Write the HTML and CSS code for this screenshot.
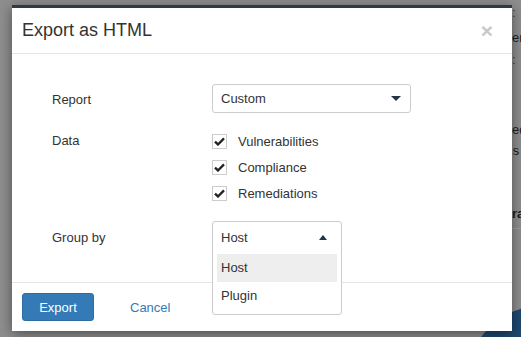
FILE: index.html
```html
<!DOCTYPE html>
<html>
<head>
<title>Export as HTML</title>
<link rel="stylesheet" href="styles.css">
</head>
<body>

<div id="page">
    <span class="bg-text t1">:</span>
    <span class="bg-text t2">en</span>
    <span class="bg-text t3">:</span>
    <span class="bg-text t4">ed</span>
    <span class="bg-text t5">s:</span>
    <span class="bg-text t6">ra</span>
    <div class="bg-rule"></div>
    <div class="bg-chart"></div>
</div>

<div id="modal">
    <div class="modal-header">
        <h4>Export as HTML</h4>
        <span class="close">&times;</span>
    </div>

    <div class="modal-body">
        <div class="form-row">
            <label class="row-label">Report</label>
            <div class="select">
                <span>Custom</span>
                <span class="caret"></span>
            </div>
        </div>

        <div class="form-row">
            <label class="row-label">Data</label>
            <div class="checks">
                <div class="check-row"><span class="box"><svg viewBox="0 0 12 10" width="11" height="9"><path d="M1 5.2 L4.3 8.3 L11 1.6" fill="none" stroke="#222" stroke-width="2.6"/></svg></span>Vulnerabilities</div>
                <div class="check-row"><span class="box"><svg viewBox="0 0 12 10" width="11" height="9"><path d="M1 5.2 L4.3 8.3 L11 1.6" fill="none" stroke="#222" stroke-width="2.6"/></svg></span>Compliance</div>
                <div class="check-row"><span class="box"><svg viewBox="0 0 12 10" width="11" height="9"><path d="M1 5.2 L4.3 8.3 L11 1.6" fill="none" stroke="#222" stroke-width="2.6"/></svg></span>Remediations</div>
            </div>
        </div>

        <div class="form-row">
            <label class="row-label">Group by</label>
            <div class="select-wrap">
                <div class="select-open">
                    <div class="select-head">
                        <span>Host</span>
                        <span class="caret up"></span>
                    </div>
                    <div class="option active">Host</div>
                    <div class="option">Plugin</div>
                </div>
            </div>
        </div>
    </div>

    <div class="modal-footer">
        <button class="btn-primary">Export</button>
        <a class="btn-link">Cancel</a>
    </div>
</div>

</body>
</html>
```

FILE: styles.css
```css
html, body {
    margin: 0;
    height: 100%;
    overflow: hidden;
}

body {
    font-family: "Liberation Sans", Arial, sans-serif;
    font-size: 13px;
    color: #333;
    background: #8e8e8e;
    position: relative;
}

/* page behind the overlay */
#page {
    position: absolute;
    inset: 0;
    overflow: hidden;
}

.bg-text {
    position: absolute;
    left: 512px;
    color: #1e1e1e;
    font-size: 13px;
    line-height: 16px;
    white-space: nowrap;
}

.t1 { top: 5px; color: #2a3d55; }
.t2 { top: 30px; }
.t3 { top: 52px; color: #2a3d55; }
.t4 { top: 122px; }
.t5 { top: 144px; font-family: "Liberation Mono", monospace; }
.t6 { top: 206px; font-weight: bold; }

.bg-rule {
    position: absolute;
    left: 512px;
    right: 0;
    top: 228px;
    height: 1px;
    background: #9c9c9c;
}

.bg-chart {
    position: absolute;
    left: 465px;
    top: 305px;
    width: 160px;
    height: 160px;
    border-radius: 50%;
    background: #1f4870;
}

#modal {
    position: relative;
    margin: 5px 0 0 12px;
    width: 500px;
    background: #fff;
    border-top: 3px solid #2b3b4c;
    box-shadow: 0 3px 12px rgba(0, 0, 0, 0.45);
}

.modal-header {
    display: flex;
    justify-content: space-between;
    align-items: center;
    height: 45px;
    padding: 0 19px 0 10px;
    border-bottom: 1px solid #e5e5e5;
}

.modal-header h4 {
    margin: 0;
    font-size: 18px;
    font-weight: normal;
    color: #333;
}

.close {
    font-size: 21px;
    font-weight: bold;
    color: #c8c8c8;
    line-height: 1;
}

.modal-body {
    padding: 30px 40px 30px 40px;
    display: flex;
    flex-direction: column;
    gap: 21px;
}

.form-row {
    display: flex;
    align-items: flex-start;
}

.row-label {
    width: 160px;
    flex: none;
}

.form-row:first-child .row-label { padding-top: 8px; }
.form-row:nth-child(2) .row-label { margin-top: -1px; }
.form-row:last-child .row-label { padding-top: 8px; }

.select {
    width: 199px;
    height: 29px;
    box-sizing: border-box;
    border: 1px solid #ccc;
    border-radius: 3px;
    display: flex;
    align-items: center;
    justify-content: space-between;
    padding: 0 9px 0 8px;
}

.caret {
    width: 0;
    height: 0;
    border-left: 5px solid transparent;
    border-right: 5px solid transparent;
    border-top: 5px solid #233447;
}

.caret.up {
    border-top: none;
    border-bottom: 5px solid #233447;
    border-left-width: 4.5px;
    border-right-width: 4.5px;
}

.checks {
    display: flex;
    flex-direction: column;
    gap: 11px;
}

.check-row {
    display: flex;
    align-items: center;
    height: 15px;
}

.box {
    width: 15px;
    height: 15px;
    box-sizing: border-box;
    border: 1px solid #ccc;
    display: flex;
    align-items: center;
    justify-content: center;
    margin-right: 11px;
}

.select-wrap {
    position: relative;
    width: 130px;
    height: 30px;
}

.select-open {
    position: absolute;
    top: -1px;
    left: 0;
    width: 130px;
    box-sizing: border-box;
    border: 1px solid #ccc;
    border-radius: 3px;
    background: #fff;
    padding: 0 4px 4px 4px;
    z-index: 2;
}

.select-head {
    display: flex;
    justify-content: space-between;
    align-items: center;
    height: 31px;
    padding: 0 10px 0 4px;
    margin-bottom: 1px;
}

.option {
    height: 28px;
    line-height: 28px;
    padding-left: 4px;
}

.option.active {
    background: #eee;
}

.modal-footer {
    display: flex;
    align-items: center;
    padding: 10px;
    border-top: 1px solid #e5e5e5;
}

.btn-primary {
    width: 72px;
    height: 28px;
    background: #337ab7;
    border: 1px solid #2e6da4;
    border-radius: 3px;
    color: #fff;
    font-family: inherit;
    font-size: 13px;
    padding: 0;
}

.btn-link {
    color: #337ab7;
    margin-left: 36px;
}
```
